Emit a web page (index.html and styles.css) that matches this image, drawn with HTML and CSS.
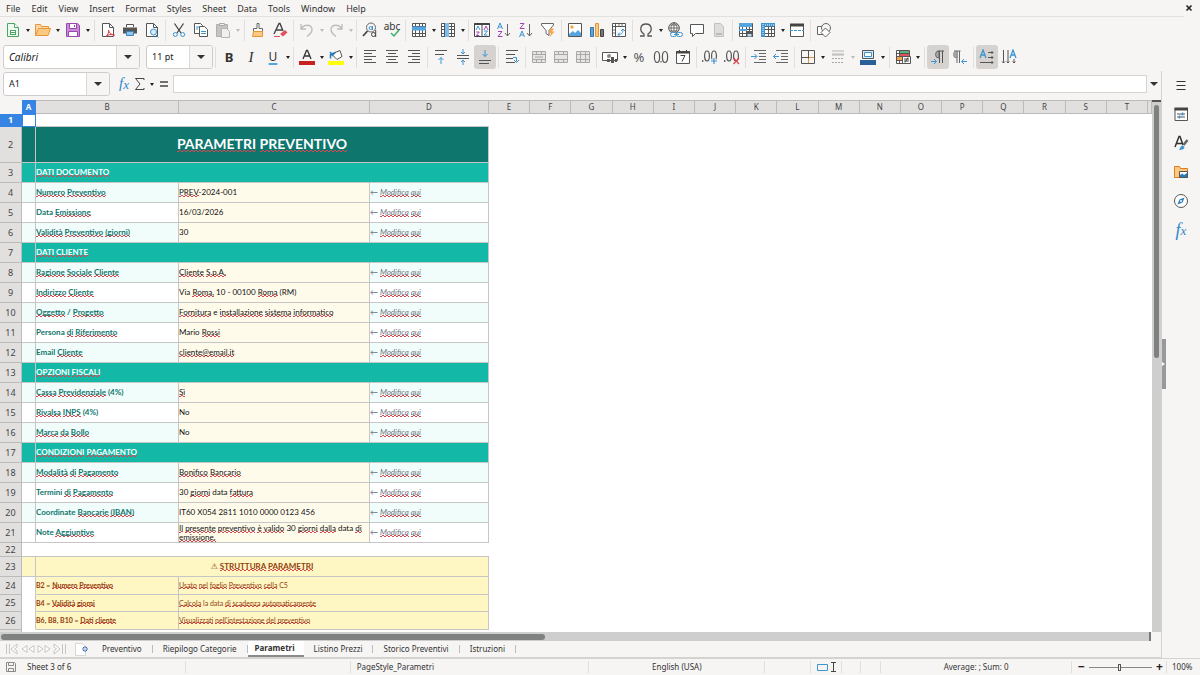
FILE: index.html
```html
<!DOCTYPE html>
<html lang="it">
<head>
<meta charset="utf-8">
<title>Parametri Preventivo</title>
<link rel="stylesheet" href="styles.css">
</head>
<body>
<svg class="defs" aria-hidden="true">
  <symbol id="grid" viewBox="0 0 16 16"><path d="M1.5 1.5h13v13h-13zM1.5 4.5h13M1.5 7.5h13M1.5 11.5h13M4.5 1.5v13M8.5 1.5v13M11.5 1.5v13" fill="#fff" stroke="#555"/></symbol>
  <symbol id="merge" viewBox="0 0 16 16"><path d="M1.500 2.500h13v11h-13zM1.500 5.500h13M1.500 10.500h13M5.500 2.500v3M10.500 2.500v3M5.500 10.500v3M10.500 10.500v3" fill="#e6e5e3" stroke="#a9a8a6"/></symbol>
  <symbol id="pilcrow" viewBox="0 0 16 16"><path d="M7.500 2H14M9.500 2v12M12.500 2v12" fill="none" stroke="#555"/><path d="M9 2a3.500 3.500 0 0 0 0 7z" fill="#aaa" stroke="#666"/></symbol>
</svg>
<nav class="menubar" aria-label="Menu">
  <button>File</button><button>Edit</button><button>View</button><button>Insert</button><button>Format</button><button>Styles</button><button>Sheet</button><button>Data</button><button>Tools</button><button>Window</button><button>Help</button>
  <button class="close" aria-label="Close document"><svg viewBox="0 0 8 8"><path d="M1.500 1.500l5 5M6.500 1.500l-5 5" stroke="#222" stroke-width="1.600"/></svg></button>
</nav>
<div class="toolbar" role="toolbar" aria-label="Standard">
  <div class="group roomy">
    <button class="icon" aria-label="New"><svg viewBox="0 0 16 16"><path d="M2.500 1.500h7l4 4v9h-11z" fill="#eefaf0" stroke="#4aa564"/><path d="M9.500 1.500v4h4" fill="#fff" stroke="#4aa564"/><path d="M5 8h6v5H5z" fill="#4aa564"/><path d="M6 9.500h4M6 11.500h4" stroke="#fff"/></svg></button><button class="drop" aria-label="New options"></button>
    <button class="icon" aria-label="Open"><svg viewBox="0 0 16 16"><path d="M.5 13.500v-11h5l1 2h7v3" fill="#fbd6a1" stroke="#e8953a"/><path d="M.5 13.500l3-7h12l-2.500 7z" fill="#fbc97f" stroke="#e8953a"/></svg></button><button class="drop" aria-label="Open options"></button>
    <button class="icon" aria-label="Save"><svg viewBox="0 0 16 16"><path d="M1.500 1.500h11l2 2v11h-13z" fill="#c98bd8" stroke="#9a47b0"/><path d="M4.500 1.500h7v5h-7zM3.500 9.500h9v5h-9z" fill="#fff" stroke="#9a47b0"/><path d="M9.500 3v2" stroke="#9a47b0"/></svg></button><button class="drop" aria-label="Save options"></button>
  </div>
  <div class="group">
    <button class="icon" aria-label="Export as PDF"><svg viewBox="0 0 16 16"><path d="M2.500 1.500h7l4 4v9h-11z" fill="#fff" stroke="#555"/><path d="M9.500 1.500v4h4" fill="none" stroke="#555"/><path d="M6 14.500c2-2 3-4 2.500-6.500M8.500 8c.5 3 3 5 6 5M6 14.500c2-2 5-2.500 8.500-1.500" fill="none" stroke="#d9363e"/></svg></button>
    <button class="icon" aria-label="Print"><svg viewBox="0 0 16 16"><path d="M4.500 5V2.500h7V5" fill="#fff" stroke="#555"/><path d="M1 5.500h14v6H1z" fill="#555"/><path d="M4.500 9.500h7v4h-7z" fill="#8fc4ee" stroke="#3e82b8"/></svg></button>
    <button class="icon" aria-label="Print preview"><svg viewBox="0 0 16 16"><path d="M2.500 1.500h7l4 4v9h-11z" fill="#fff" stroke="#555"/><path d="M9.500 1.500v4h4" fill="none" stroke="#555"/><circle cx="9.500" cy="10" r="3" fill="#d8ecfb" stroke="#3d94d1"/><path d="M11.500 12.500l3 3" stroke="#3d94d1"/></svg></button>
  </div>
  <div class="group roomy">
    <button class="icon" aria-label="Cut"><svg viewBox="0 0 16 16" fill="none"><path d="M3.500 1.500l6.500 9.500M12.500 1.500L6 11" stroke="#444" stroke-width="1.300"/><circle cx="4.300" cy="12.500" r="2" stroke="#3d94d1"/><circle cx="11.700" cy="12.500" r="2" stroke="#3d94d1"/></svg></button>
    <button class="icon" aria-label="Copy"><svg viewBox="0 0 16 16"><path d="M1.500 1.500h6l2 2v8h-8z" fill="#fff" stroke="#555"/><path d="M6.500 4.500h5l3 3v7h-8z" fill="#fff" stroke="#555"/><path d="M3 5h3M3 7h2M8 9.500h5M8 11.500h5" stroke="#3d94d1"/></svg></button>
    <button class="icon" aria-label="Paste" disabled><svg viewBox="0 0 16 16"><path d="M1.500 2.500h11v12h-11z" fill="#c4c3c1" stroke="#b0afad"/><path d="M4.500 1.500h5v2h-5z" fill="#eee" stroke="#aaa"/><path d="M6.500 6.500h5l3 3v6h-8z" fill="#f1f0ef" stroke="#b5b4b2"/></svg></button><button class="drop" aria-label="Paste options" disabled></button>
  </div>
  <div class="group">
    <button class="icon" aria-label="Clone formatting"><svg viewBox="0 0 16 16"><path d="M7 1.500h2v5h3.500v3h-9v-3H7z" fill="#fff" stroke="#666"/><path d="M3.500 9.500h9v5h-10z" fill="#fbc97f" stroke="#e8953a"/></svg></button>
    <button class="icon" aria-label="Clear formatting"><svg viewBox="0 0 16 16"><path d="M2 12L7 1.500h1L11 9M4 8h6" fill="none" stroke="#444" stroke-width="1.400"/><path d="M8 12l5-4 2.500 2.500-4.500 4z" fill="#e0525c"/><path d="M2 14.500h6" stroke="#e0525c"/></svg></button>
  </div>
  <div class="group">
    <button class="icon" aria-label="Undo" disabled><svg viewBox="0 0 16 16" fill="none" stroke="#bdbcba" stroke-width="1.300"><path d="M2 2v5h5M2 7c3-5 10-5 11 0 .4 3-3 6-5 7.500"/></svg></button><button class="drop" aria-label="Undo list" disabled></button>
    <button class="icon" aria-label="Redo" disabled><svg viewBox="0 0 16 16" fill="none" stroke="#bdbcba" stroke-width="1.300"><path d="M14 2v5H9M14 7C11 2 4 2 3 7c-.4 3 3 6 5 7.500"/></svg></button><button class="drop" aria-label="Redo list" disabled></button>
  </div>
  <div class="group">
    <button class="icon" aria-label="Find and replace"><svg viewBox="0 0 16 16" fill="none"><circle cx="9" cy="5.500" r="4.500" stroke="#666"/><path d="M5.500 9L1 14" stroke="#444" stroke-width="1.800"/><circle cx="8.700" cy="6" r="1.500" stroke="#3d94d1"/><path d="M10.500 4v4" stroke="#3d94d1"/><circle cx="11.500" cy="12.500" r="2" stroke="#444"/><path d="M13.700 8v7" stroke="#444"/></svg></button>
    <button class="icon spell" aria-label="Spelling"><span>abc</span><svg viewBox="0 0 16 16"><path d="M7 11l3 3 5-6" fill="none" stroke="#3fae6a" stroke-width="1.500"/></svg></button>
  </div>
  <div class="group">
    <button class="icon" aria-label="Row"><svg viewBox="0 0 16 16"><use href="#grid"/><path d="M1 4.500h14v4H1z" fill="#54a5e0"/></svg></button><button class="drop" aria-label="Row options"></button>
    <button class="icon" aria-label="Column"><svg viewBox="0 0 16 16"><use href="#grid"/><path d="M5 1h4v14H5z" fill="#7dbdec"/></svg></button><button class="drop" aria-label="Column options"></button>
  </div>
  <div class="group">
    <button class="icon" aria-label="Sort"><svg viewBox="0 0 16 16" fill="none"><path d="M.5 1.500h15v13H.5zM8 1v14" fill="#fff" stroke="#444"/><path d="M.5 2h15" stroke="#444" stroke-width="2"/><path d="M2 8l2-4 2 4M10 9h3.500l-3.500 4h3.500" stroke="#3d94d1"/><path d="M2.300 10h3l-3 3.500h3M10 8l2-4 2 4" stroke="#a044b4"/></svg></button>
    <button class="icon" aria-label="Sort ascending"><svg viewBox="0 0 16 16" fill="none"><path d="M1.500 7L4 1l2.500 6M2.500 5h3" stroke="#3d94d1"/><path d="M2 9.500h4l-4 5h4.500" stroke="#a044b4"/><path d="M11.500 2v11.500M9 11l2.500 3 2.500-3" stroke="#666"/></svg></button>
    <button class="icon" aria-label="Sort descending"><svg viewBox="0 0 16 16" fill="none"><path d="M2 1.500h4l-4 5h4.500" stroke="#a044b4"/><path d="M1.500 15L4 9l2.500 6M2.500 13h3" stroke="#3d94d1"/><path d="M11.500 2v11.500M9 11l2.500 3 2.500-3" stroke="#666"/></svg></button>
    <button class="icon" aria-label="AutoFilter"><svg viewBox="0 0 16 16"><path d="M1.500 1.500h12v1.500L9 8.500v5l-3-2v-3L1.500 3z" fill="#fff" stroke="#666"/><path d="M10 6.500h4l-2 3h2.500l-5 6 1.500-4.500H9z" fill="#f5a54a"/></svg></button>
  </div>
  <div class="group">
    <button class="icon" aria-label="Insert image"><svg viewBox="0 0 16 16"><path d="M1.500 1.500h13v13h-13z" fill="#fff" stroke="#555"/><path d="M2 14V12l4-3 2 2 3-3 3 3v3z" fill="#54a5e0"/><circle cx="5" cy="5" r="1.700" fill="#f5a54a"/></svg></button>
    <button class="icon" aria-label="Insert chart"><svg viewBox="0 0 16 16"><path d="M1.500 5.500h3v9h-3z" fill="#54a5e0" stroke="#3379ad"/><path d="M6.500 1.500h3v13h-3z" fill="#fbc97f" stroke="#e8953a"/><path d="M11.500 7.500h3v7h-3z" fill="#777" stroke="#444"/></svg></button>
    <button class="icon" aria-label="Pivot table"><svg viewBox="0 0 16 16" fill="none"><path d="M1.500 1.500h13v13h-13zM1.500 4.500h13M4.500 1.500v13" fill="#fff" stroke="#555"/><path d="M7 3h6M3 7v6" stroke="#777" stroke-dasharray="2 1"/><path d="M7 12.500c4 0 5-1.500 5-5M10 9l2-2 2 2M9 10.500l-2 2 2 2" stroke="#3d94d1"/></svg></button>
  </div>
  <div class="group">
    <button class="icon" aria-label="Special character"><svg viewBox="0 0 16 16"><path d="M2 14h4v-2C1 9 2 2 8 2s7 7 2 10v2h4" fill="none" stroke="#555" stroke-width="1.300"/></svg></button><button class="drop" aria-label="Special characters"></button>
    <button class="icon" aria-label="Hyperlink"><svg viewBox="0 0 16 16" fill="none"><circle cx="7" cy="6" r="5.300" stroke="#555"/><path d="M1.700 6h10.600M3 3h8M3 9h8M7 .7v10.600M7 .7c-4 3-4 8 0 10.600M7 .7c4 3 4 8 0 10.600" stroke="#555" stroke-width=".8"/><rect x="3.500" y="10.500" width="6" height="4" rx="2" fill="#f6f5f4" stroke="#3d94d1"/><rect x="9.500" y="10.500" width="6" height="4" rx="2" fill="#f6f5f4" stroke="#3d94d1"/><path d="M7 12.500h5" stroke="#3d94d1"/></svg></button>
    <button class="icon" aria-label="Comment"><svg viewBox="0 0 16 16"><path d="M1.500 2.500h13v9h-8l-3 3v-3h-2z" fill="#fff" stroke="#555"/></svg></button>
    <button class="icon" aria-label="Headers and footers" disabled><svg viewBox="0 0 16 16"><path d="M3.500 1.500h6l3 3v10h-9z" fill="#ddd" stroke="#c2c1bf"/><path d="M5 11h6v2H5z" fill="#bbb"/></svg></button>
  </div>
  <div class="group">
    <button class="icon" aria-label="Define print area"><svg viewBox="0 0 16 16"><use href="#grid"/><path d="M1 1h13v4H1zM1 7h8v2H1z" fill="#54a5e0"/><path d="M8 9h7v6H8z" fill="#555"/><path d="M9.500 12h4v2.500h-4z" fill="#b8dbf5"/></svg></button>
    <button class="icon" aria-label="Freeze rows and columns"><svg viewBox="0 0 16 16"><use href="#grid"/><path d="M1 1h14v3.500H1zM1 1h4v14H1z" fill="#3d94d1"/><path d="M3 2v12M5 3h9" stroke="#fff" stroke-dasharray="1 1"/></svg></button><button class="drop" aria-label="Freeze options"></button>
    <button class="icon" aria-label="Split window"><svg viewBox="0 0 16 16"><path d="M1.500 2.500h13v12h-13z" fill="#fff" stroke="#555"/><path d="M1 3h14" stroke="#444" stroke-width="3"/><path d="M1 8.500h14" stroke="#3d94d1" stroke-dasharray="3 1"/></svg></button>
  </div>
  <div class="group">
    <button class="icon" aria-label="Show draw functions"><svg viewBox="0 0 16 16"><path d="M1.500 4.500h7v8h-7z" fill="#fff" stroke="#666"/><circle cx="10" cy="6" r="4.500" fill="#f6f5f4" stroke="#666"/><path d="M9.500 6l4.500 4.500L9.500 15 5 10.500z" fill="#fff" stroke="#666"/></svg></button>
  </div>
</div>
<div class="toolbar format" role="toolbar" aria-label="Formatting">
  <div class="combo font"><input type="text" aria-label="Font name" value="Calibri"><button class="pick" aria-label="Font list"></button></div>
  <div class="combo size"><input type="text" aria-label="Font size" value="11 pt"><button class="pick" aria-label="Size list"></button></div>
  <div class="group lead">
    <button class="icon letter bold">B</button><button class="icon letter italic">I</button><button class="icon letter under">U</button><button class="drop" aria-label="Underline styles"></button>
  </div>
  <div class="group">
    <button class="icon" aria-label="Font color"><svg viewBox="0 0 16 16"><path d="M4 10L7.500 1.500h1L12 10M5.500 7h5" fill="none" stroke="#333" stroke-width="1.300"/><path d="M0 12h16v4H0z" fill="#c9211e"/></svg></button><button class="drop" aria-label="Font colors"></button>
    <button class="icon" aria-label="Background color"><svg viewBox="0 0 16 16"><path d="M7 3.500l5-2 2 6-5 3-4-4z" fill="#fff" stroke="#555"/><path d="M2.500 9.500v-4l5-2M2 3l3 4" fill="none" stroke="#2a7cb8" stroke-width="1.500"/><path d="M0 12h16v4H0z" fill="#ff0"/></svg></button><button class="drop" aria-label="Background colors"></button>
  </div>
  <div class="group">
    <button class="icon" aria-label="Align left"><svg viewBox="0 0 16 16"><path d="M2 1.500h12M2 4.500h8M2 7.500h12M2 10.500h8M2 13.500h12" stroke="#555"/></svg></button>
    <button class="icon" aria-label="Center"><svg viewBox="0 0 16 16"><path d="M2 1.500h12M4 4.500h8M2 7.500h12M4 10.500h8M2 13.500h12" stroke="#555"/></svg></button>
    <button class="icon" aria-label="Align right"><svg viewBox="0 0 16 16"><path d="M2 1.500h12M6 4.500h8M2 7.500h12M6 10.500h8M2 13.500h12" stroke="#555"/></svg></button>
  </div>
  <div class="group">
    <button class="icon" aria-label="Align top"><svg viewBox="0 0 16 16" fill="none"><path d="M2 1.500h12M2 5.500h9" stroke="#555"/><path d="M8 15V8.500M5.500 11L8 8.500l2.500 2.500" stroke="#3d94d1"/></svg></button>
    <button class="icon" aria-label="Center vertically"><svg viewBox="0 0 16 16" fill="none"><path d="M2 6.500h12M2 9.500h12" stroke="#555"/><path d="M8 0v4.500M6 3l2 2 2-2M8 16v-4.500M6 13l2-2 2 2" stroke="#3d94d1"/></svg></button>
    <button class="icon on" aria-label="Align bottom" aria-pressed="true"><svg viewBox="0 0 16 16" fill="none"><path d="M2 11.500h12M2 14.500h10" stroke="#555"/><path d="M8 1v6.500M5.500 5L8 7.500 10.500 5" stroke="#3d94d1"/></svg></button>
  </div>
  <div class="group">
    <button class="icon" aria-label="Wrap text"><svg viewBox="0 0 16 16" fill="none"><path d="M2 1.500h12M2 5.500h9M2 9.500h7M2 13.500h9" stroke="#555"/><path d="M9 8.500h3.500v4M10 11l2.500 2.500L15 11" stroke="#3d94d1"/></svg></button>
  </div>
  <div class="group">
    <button class="icon" aria-label="Merge and center" disabled><svg viewBox="0 0 16 16"><use href="#merge"/><path d="M4 8h8" stroke="#a9a8a6"/></svg></button>
    <button class="icon" aria-label="Merge cells" disabled><svg viewBox="0 0 16 16"><use href="#merge"/></svg></button>
    <button class="icon" aria-label="Split cells" disabled><svg viewBox="0 0 16 16"><use href="#merge"/><path d="M5.500 5v6M10.500 5v6" stroke="#a9a8a6"/></svg></button>
  </div>
  <div class="group">
    <button class="icon" aria-label="Currency"><svg viewBox="0 0 16 16"><path d="M.5 3.500h15v8H.5z" fill="#fff" stroke="#555"/><circle cx="7" cy="7" r="2" fill="#888"/><path d="M5 13v-3h3v3zM9 14V8h3v6zM13 13v-3h2v3z" fill="#555"/></svg></button><button class="drop" aria-label="Currency list"></button>
    <button class="icon glyph" aria-label="Percent">%</button>
    <button class="icon" aria-label="Number"><svg viewBox="0 0 16 16" fill="none" stroke="#555" stroke-width="1.200"><ellipse cx="4" cy="8" rx="2.600" ry="5.500"/><ellipse cx="12" cy="8" rx="2.600" ry="5.500"/><path d="M8 12v1.500"/></svg></button>
    <button class="icon" aria-label="Date"><svg viewBox="0 0 16 16" fill="none"><path d="M1.500 2.500h13v12h-13z" fill="#fff" stroke="#555"/><path d="M1 3.500h14" stroke="#444" stroke-width="2"/><path d="M4.500 1v3M11.500 1v3" stroke="#444"/><path d="M5.500 6.500H10L7 12.500" stroke="#444"/></svg></button>
  </div>
  <div class="group">
    <button class="icon" aria-label="Add decimal place"><svg viewBox="0 0 16 16" fill="none" stroke="#555" stroke-width="1.200"><path d="M.7 11v2"/><ellipse cx="5" cy="7" rx="2.400" ry="5"/><ellipse cx="12" cy="7" rx="2.400" ry="5"/><path d="M12 9v6M9 12h6" stroke="#f6f5f4" stroke-width="3"/><path d="M12 9v6M9 12h6" stroke="#3d94d1"/></svg></button>
    <button class="icon" aria-label="Delete decimal place"><svg viewBox="0 0 16 16" fill="none" stroke="#555" stroke-width="1.200"><path d="M.7 11v2"/><ellipse cx="5" cy="7" rx="2.400" ry="5"/><ellipse cx="12" cy="7" rx="2.400" ry="5"/><path d="M9.500 9l5.500 6M15 9l-5.500 6" stroke="#e0434c"/></svg></button>
  </div>
  <div class="group">
    <button class="icon" aria-label="Increase indent"><svg viewBox="0 0 16 16" fill="none"><path d="M3 1.500h12M8 4.500h7M8 7.500h7M8 10.500h7M3 13.500h12" stroke="#666"/><path d="M0 7.500h5.500M3.500 5l2.500 2.500L3.500 10" stroke="#3d94d1"/></svg></button>
    <button class="icon" aria-label="Decrease indent"><svg viewBox="0 0 16 16" fill="none"><path d="M3 1.500h12M8 4.500h7M8 7.500h7M8 10.500h7M3 13.500h12" stroke="#666"/><path d="M6 7.500H.5M3 5L.5 7.500 3 10" stroke="#3d94d1"/></svg></button>
  </div>
  <div class="group roomy">
    <button class="icon" aria-label="Borders"><svg viewBox="0 0 16 16"><path d="M8.500 2v12M2 8.500h12" stroke="#e8953a"/><path d="M1.500 1.500h13v13h-13zM8.500 1.500v8M1.500 8.500h7" fill="none" stroke="#555"/></svg></button><button class="drop" aria-label="Border list"></button>
    <button class="icon" aria-label="Border style" disabled><svg viewBox="0 0 16 16"><path d="M2 2h12M2 5h12M2 6h12" stroke="#b5b4b2"/><path d="M2 9.500h12M2 13.500h12" stroke="#a9a8a6" stroke-dasharray="2 1"/></svg></button><button class="drop" aria-label="Border styles" disabled></button>
    <button class="icon" aria-label="Border color"><svg viewBox="0 0 16 16"><path d="M2.500 1.500h11v8h-11z" fill="#d8ecfb" stroke="#555"/><path d="M4.500 3.500h7v4h-7z" fill="#fff" stroke="#3d94d1"/><path d="M0 11h16v5H0z" fill="#2a6099"/></svg></button><button class="drop" aria-label="Border colors"></button>
  </div>
  <div class="group roomy">
    <button class="icon" aria-label="Conditional formatting"><svg viewBox="0 0 16 16"><use href="#grid"/><path d="M5 2h9v2H5z" fill="#5bb27d"/><path d="M5 5h9v2H5z" fill="#e0525c"/><path d="M2 8h5v3H2z" fill="#f5a54a"/><path d="M7.500 7.500h8v7h-8z" fill="#fff" stroke="#555"/><path d="M9 10h5M9 12h5M13 8.500l-3 5" stroke="#444"/></svg></button><button class="drop" aria-label="Conditional list"></button>
  </div>
  <div class="group">
    <button class="icon on" aria-label="Left-to-right" aria-pressed="true"><svg viewBox="0 0 16 16" fill="none"><use href="#pilcrow"/><path d="M1 12.500h5M4 10l2.500 2.500L4 15" stroke="#3d94d1"/></svg></button>
    <button class="icon" aria-label="Right-to-left"><svg viewBox="0 0 16 16" fill="none"><path d="M2 2h6.500M5 2v12M7.500 2v12" stroke="#666"/><path d="M5 2a3.500 3.500 0 0 0 0 7z" fill="#aaa" stroke="#888"/><path d="M15 12.500h-5M12 10l-2.500 2.500L12 15" stroke="#3d94d1"/></svg></button>
  </div>
  <div class="group">
    <button class="icon on" aria-label="Text left to right" aria-pressed="true"><svg viewBox="0 0 16 16" fill="none"><path d="M1 9l3-8 3 8M2 6h4" stroke="#3d94d1" stroke-width="1.300"/><path d="M9 3.500h5M9 8.500h5M1 13.500h13M12.500 2L14 3.500 12.500 5M12.500 7L14 8.500 12.500 10M12.500 12l1.500 1.500-1.500 1.500" stroke="#555"/></svg></button>
    <button class="icon" aria-label="Text top to bottom"><svg viewBox="0 0 16 16" fill="none"><path d="M9 9l3-8 3 8M10 6h4" stroke="#3d94d1" stroke-width="1.300"/><path d="M2.500 1v13M7 1v13M13 10v4M1 12.500L2.500 14 4 12.500M5.500 12.500L7 14l1.500-1.500M11.500 12.500L13 14l1.500-1.500" stroke="#555"/></svg></button>
  </div>
</div>
<div class="work">
  <main class="book">
    <div class="formula">
      <div class="combo name"><input type="text" aria-label="Name box" value="A1"><button class="pick" aria-label="Named ranges"></button></div>
      <button class="fn wiz" aria-label="Function wizard"><i>f</i><i class="x">x</i></button>
      <button class="fn" aria-label="Select function"><svg viewBox="0 0 12 14"><path d="M10 3V1.500H1.500L6 7l-4.500 5.500H10V11" fill="none" stroke="#444"/></svg></button><button class="drop" aria-label="Function list"></button>
      <button class="fn" aria-label="Formula"><svg viewBox="0 0 12 14"><path d="M2 5h8M2 9h8" stroke="#444" stroke-width="1.500"/></svg></button>
      <input class="line" type="text" aria-label="Input line">
      <button class="pick bare" aria-label="Expand formula bar"></button>
    </div>
    <div class="view">
      <div class="sheet">
        <table>
          <colgroup><col class="c-head"><col class="c-a"><col class="c-b"><col class="c-c"><col class="c-d"><col span="16"><col class="c-end"></colgroup>
          <thead><tr><th class="corner"></th><th class="sel">A</th><th>B</th><th>C</th><th>D</th><th>E</th><th>F</th><th>G</th><th>H</th><th>I</th><th>J</th><th>K</th><th>L</th><th>M</th><th>N</th><th>O</th><th>P</th><th>Q</th><th>R</th><th>S</th><th>T</th><th></th></tr></thead>
          <tbody>
            <tr class="r1"><th class="sel">1</th><td class="cursor"></td><td colspan="3"></td></tr>
            <tr class="title"><th>2</th><td></td><td colspan="3"><u>PARAMETRI</u> <u>PREVENTIVO</u></td></tr>
            <tr class="section"><th>3</th><td></td><td colspan="3"><u>DATI</u> <u>DOCUMENTO</u></td></tr>
            <tr class="row mint"><th>4</th><td></td><td><u>Numero</u> <u>Preventivo</u></td><td><u>PREV</u>-2024-001</td><td>← <u>Modifica</u> <u>qui</u></td></tr>
            <tr class="row"><th>5</th><td></td><td>Data <u>Emissione</u></td><td>16/03/2026</td><td>← <u>Modifica</u> <u>qui</u></td></tr>
            <tr class="row mint"><th>6</th><td></td><td><u>Validità</u> <u>Preventivo</u> <u>(giorni)</u></td><td>30</td><td>← <u>Modifica</u> <u>qui</u></td></tr>
            <tr class="section"><th>7</th><td></td><td colspan="3"><u>DATI</u> <u>CLIENTE</u></td></tr>
            <tr class="row mint"><th>8</th><td></td><td><u>Ragione</u> <u>Sociale</u> <u>Cliente</u></td><td><u>Cliente</u> <u>S.p.A.</u></td><td>← <u>Modifica</u> <u>qui</u></td></tr>
            <tr class="row"><th>9</th><td></td><td><u>Indirizzo</u> <u>Cliente</u></td><td>Via <u>Roma,</u> 10 - 00100 <u>Roma</u> (RM)</td><td>← <u>Modifica</u> <u>qui</u></td></tr>
            <tr class="row mint"><th>10</th><td></td><td><u>Oggetto</u> / <u>Progetto</u></td><td><u>Fornitura</u> e <u>installazione</u> <u>sistema</u> <u>informatico</u></td><td>← <u>Modifica</u> <u>qui</u></td></tr>
            <tr class="row"><th>11</th><td></td><td>Persona <u>di</u> <u>Riferimento</u></td><td>Mario <u>Rossi</u></td><td>← <u>Modifica</u> <u>qui</u></td></tr>
            <tr class="row mint"><th>12</th><td></td><td>Email <u>Cliente</u></td><td><u>cliente@email.it</u></td><td>← <u>Modifica</u> <u>qui</u></td></tr>
            <tr class="section"><th>13</th><td></td><td colspan="3"><u>OPZIONI</u> <u>FISCALI</u></td></tr>
            <tr class="row mint"><th>14</th><td></td><td><u>Cassa</u> <u>Previdenziale</u> (4%)</td><td><u>Sì</u></td><td>← <u>Modifica</u> <u>qui</u></td></tr>
            <tr class="row"><th>15</th><td></td><td><u>Rivalsa</u> <u>INPS</u> (4%)</td><td>No</td><td>← <u>Modifica</u> <u>qui</u></td></tr>
            <tr class="row mint"><th>16</th><td></td><td><u>Marca</u> <u>da</u> <u>Bollo</u></td><td>No</td><td>← <u>Modifica</u> <u>qui</u></td></tr>
            <tr class="section"><th>17</th><td></td><td colspan="3"><u>CONDIZIONI</u> <u>PAGAMENTO</u></td></tr>
            <tr class="row mint"><th>18</th><td></td><td><u>Modalità</u> <u>di</u> <u>Pagamento</u></td><td><u>Bonifico</u> <u>Bancario</u></td><td>← <u>Modifica</u> <u>qui</u></td></tr>
            <tr class="row"><th>19</th><td></td><td>Termini <u>di</u> <u>Pagamento</u></td><td>30 <u>giorni</u> data <u>fattura</u></td><td>← <u>Modifica</u> <u>qui</u></td></tr>
            <tr class="row mint"><th>20</th><td></td><td>Coordinate <u>Bancarie</u> <u>(IBAN)</u></td><td>IT60 X054 2811 1010 0000 0123 456</td><td>← <u>Modifica</u> <u>qui</u></td></tr>
            <tr class="row"><th>21</th><td></td><td>Note <u>Aggiuntive</u></td><td class="wrap"><u>Il</u> <u>presente</u> <u>preventivo</u> <u>è</u> <u>valido</u> 30 <u>giorni</u> <u>dalla</u> data <u>di</u> <u>emissione.</u></td><td>← <u>Modifica</u> <u>qui</u></td></tr>
            <tr class="r22"><th>22</th><td></td><td colspan="3"></td></tr>
            <tr class="notehead"><th>23</th><td></td><td colspan="3">⚠ <u>STRUTTURA</u> <u>PARAMETRI</u></td></tr>
            <tr class="note n24"><th>24</th><td></td><td>B2 = <u>Numero</u> <u>Preventivo</u></td><td colspan="2"><u>Usato</u> <u>nel</u> <u>foglio</u> <u>Preventivo</u> <u>cella</u> C5</td></tr>
            <tr class="note"><th>25</th><td></td><td>B4 = <u>Validità</u> <u>giorni</u></td><td colspan="2"><u>Calcola</u> la data <u>di</u> <u>scadenza</u> <u>automaticamente</u></td></tr>
            <tr class="note n26"><th>26</th><td></td><td>B6, B8, B10 = <u>Dati</u> <u>cliente</u></td><td colspan="2"><u>Visualizzati</u> <u>nell'intestazione</u> <u>del</u> <u>preventivo</u></td></tr>
            <tr class="r27"><th></th><td></td><td colspan="3"></td></tr>
          </tbody>
        </table>
      </div>
      <div class="vscroll"><div class="vthumb"></div></div>
    </div>
    <div class="hscroll"><div class="htrack"><div class="hthumb"></div></div></div>
    <nav class="tabs" aria-label="Sheets">
      <svg class="steps" viewBox="0 0 62 12" fill="#fff" stroke="#c6c5c3"><path d="M1.500 1v10M4.500 1v10M12 1L6 6l6 5V8L9.500 6 12 4zM22 2.500L17 6l5 3.500zM29 2.500L24 6l5 3.500zM33 2.500L38 6l-5 3.500zM40 2.500L45 6l-5 3.500zM49 1l6 5-6 5V8l2.500-2L49 4zM57.500 1v10M60.500 1v10"/></svg>
      <button class="add" aria-label="Add sheet"><svg viewBox="0 0 14 14"><path d="M.5 1.500h7l3 3v9H.5z" fill="#fff" stroke="#d8d7d5"/><path d="M10 4v6M7 7h6M8 5l4 4M12 5L8 9" stroke="#3568b5"/><circle cx="10" cy="7" r="1" fill="#fff"/></svg></button>
      <button class="tab">Preventivo</button><button class="tab">Riepilogo Categorie</button><button class="tab active">Parametri</button><button class="tab">Listino Prezzi</button><button class="tab">Storico Preventivi</button><button class="tab">Istruzioni</button>
    </nav>
  </main>
  <aside class="sidebar">
    <button aria-label="Sidebar settings"><svg viewBox="0 0 16 16"><path d="M3.500 4.500h9M3.500 8.500h9M3.500 12.500h9" stroke="#333" stroke-width="1.200"/></svg></button>
    <button aria-label="Properties"><svg viewBox="0 0 16 16"><path d="M2 2.500h12.500v12H2z" fill="#fff" stroke="#555"/><path d="M1.500 3h13.500" stroke="#444" stroke-width="3"/><path d="M4 8h8M4 11h8" stroke="#555"/><path d="M9.500 6.500v3M6.500 9.500v3" stroke="#3d94d1" stroke-width="1.500"/></svg></button>
    <button aria-label="Styles"><svg viewBox="0 0 16 16" fill="none"><path d="M2 12L6 1.500h1L10 10M3.500 8.500H9" stroke="#333" stroke-width="1.500"/><path d="M14.500 5l-4 5" stroke="#666" stroke-width="2.500"/><path d="M6 15c1-1 1-4 4-4.500l1.500 1.500c0 2-2 3-5.500 3z" fill="#3d94d1"/></svg></button>
    <button aria-label="Gallery"><svg viewBox="0 0 16 16"><path d="M1.500 13.500v-11h5l1 2h7v9z" fill="#fbc97f" stroke="#e07b1e"/><path d="M6.500 7.500h8v6h-8z" fill="#fff" stroke="#555"/><path d="M7 13v-2l2.500-1.500L11 11l3-2v4z" fill="#2a7cb8"/></svg></button>
    <button aria-label="Navigator"><svg viewBox="0 0 16 16"><circle cx="8" cy="8" r="6.500" fill="#fff" stroke="#555"/><path d="M11.500 4.500L9.500 9.500l-5 2 2-5z" fill="#2a7cb8"/><circle cx="8" cy="8" r="1" fill="#fff"/></svg></button>
    <button class="wiz" aria-label="Functions"><i>f</i><i class="x">x</i></button>
    <button class="handle" aria-label="Hide sidebar"></button>
  </aside>
</div>
<footer class="status">
  <span class="saved"><svg viewBox="0 0 12 12" fill="none" stroke="#8a8988"><path d="M1.500 1.500h8l1 1v8h-9zM3.500 1.500v3h5v-3M3.500 10.500v-3h5v3"/></svg></span>
  <span>Sheet 3 of 6</span><span></span><span class="style">PageStyle_Parametri</span><span class="mid">English (USA)</span><span></span>
  <span class="mid"><svg class="mode" viewBox="0 0 20 12" fill="none"><path d="M1.500 3.500h10v6h-10z" stroke="#3d94d1"/><path d="M15 1.500h5M17.500 1.500v9M15 10.500h5" stroke="#444"/></svg></span>
  <span></span><span></span><span class="mid">Average: ; Sum: 0</span>
  <span class="zoom"><button aria-label="Zoom out">−</button><input type="range" aria-label="Zoom" min="0" max="200" value="98"><button aria-label="Zoom in">+</button></span>
  <span class="pct">100%</span>
</footer>
</body>
</html>
```
FILE: styles.css
```css
* { box-sizing: border-box; }
body { margin: 0; height: 100vh; display: flex; flex-direction: column; background: #f6f5f4; color: #333; font: 8px/12px "Noto Sans", sans-serif; overflow: hidden; }
button, input { font: inherit; color: inherit; margin: 0; padding: 0; border: 0; background: none; }
.defs { display: none; }
svg { display: block; }

.menubar { display: flex; gap: 1px; height: 17px; margin-right: 16px; padding: 1px 0 0 1px; border-bottom: 1px solid #e2e1df; font-size: 9px; }
.menubar button { padding: 0 5px; }
.menubar .close { position: absolute; right: 7px; top: 4px; width: 8px; height: 8px; padding: 0; }

.toolbar { display: flex; align-items: center; height: 26px; padding-left: 2px; }
.group { display: flex; align-items: center; }
.group + .group::before, .lead::before { content: ""; width: 1px; height: 21px; margin: 0 2px; background: #e0dfdd; }
.icon { display: flex; align-items: center; justify-content: center; width: 22px; height: 24px; border-radius: 3px; }
.icon svg { width: 16px; height: 16px; }
.icon.on { background: #d5d2cf; }
.drop { display: flex; align-items: center; justify-content: center; width: 7px; height: 22px; }
.roomy .drop, .formula .drop { width: 8px; }
.drop::after { content: ""; border: 2px solid transparent; border-top: 3px solid #222; border-bottom: 0; }
.drop:disabled::after { border-top-color: #bdbcba; }
.spell { flex-direction: column; font-size: 10px; line-height: 8px; }
.spell svg { margin-top: -8px; }

.toolbar.format { padding-left: 3px; height: 28px; }
.combo { display: flex; height: 24px; background: #fff; border: 1px solid #cfccc9; border-radius: 3px; overflow: hidden; }
.combo input { flex: 1; min-width: 0; padding-left: 5px; font-size: 9px; color: #222; }
.pick { display: flex; align-items: center; justify-content: center; width: 23px; background: #f6f5f4; border-left: 1px solid #dad7d4; }
.pick::after { content: ""; border: 4px solid transparent; border-top-color: #333; border-bottom: 0; }
.font { width: 137px; }
.combo.font input { font-style: italic; font-size: 10px; }
.size { width: 67px; margin-left: 6px; }
.name { width: 107px; }
.letter { font: 14px/20px "Noto Sans", sans-serif; }
.letter.bold { font-weight: bold; font-size: 13px; }
.italic { font-family: "Liberation Serif", serif; font-style: italic; font-size: 15px; }
.under { text-decoration: underline #54a5e0 2px; text-underline-offset: 2px; font-size: 12px; }
.glyph { font-size: 13px; color: #555; }

.work { display: flex; flex: 1; min-height: 0; }
.book { flex: 1; min-width: 0; display: flex; flex-direction: column; border-right: 1px solid #d5d3d0; }
.formula { display: flex; align-items: center; height: 29px; padding: 0 0 3px 3px; }
.fn { display: flex; justify-content: center; width: 16px; }
.fn svg { width: 12px; height: 14px; }
.wiz { color: #2f86c6; font: 15px/18px "Liberation Serif", serif; }
.formula .wiz { margin-left: 6px; align-items: flex-start; }
.wiz .x { font-size: 13px; padding-top: 2px; }
.line { flex: 1; min-width: 0; height: 18px; margin-left: 1px; background: #fff; border: 1px solid #d5d3d0; font-size: 9px; }
.bare { width: 14px; background: none; border: 0; }

.view { flex: 1; min-height: 0; display: flex; }
.sheet { flex: 1; min-width: 0; overflow: hidden; background: #fff; }
table { width: 100%; table-layout: fixed; border-spacing: 0; font: 8px/9px Lato, "DejaVu Sans", sans-serif; color: #111; }
.c-head { width: 22px; }
.c-a { width: 14px; }
.c-b { width: 143px; }
.c-c { width: 191px; }
.c-d { width: 119px; }
.c-end { width: 4px; }
th { padding: 0; font: 8px/10px "Noto Sans", sans-serif; color: #444; background: #e1e0df; border: solid #bcbbb9; border-width: 0 1px 1px 0; }
thead th { height: 14px; border-top: 1px solid #bcbbb9; }
tbody th { height: 20px; font-size: 9px; }
.corner { background: #f6f5f4; border-color: #f6f5f4; }
th.sel { background: #3584e4; border-color: #3584e4; color: #fff; font-weight: bold; }
td { padding: 0; border: solid #c6c6c6; border-width: 0 1px 1px 0; white-space: nowrap; overflow: hidden; }
.wrap { white-space: normal; }
.r1 th { height: 13px; }
.r1 td, .r22 td, .r27 td { border-right: 0; }
.r1 .cursor { border: 1px solid #3584e4; }
.title td { background: #0f766e; color: #fff; font: bold 14px/18px Lato, sans-serif; text-align: center; padding-bottom: 2px; }
.title th { height: 36px; }
.section td { background: #14b8a6; color: #fff; font-weight: bold; }
.row td:nth-child(3) { color: #0f766e; font-weight: bold; }
.mint td { background: #f0fdfa; }
.row td:nth-child(4) { background: #fffbeb; }
.row td:nth-child(5) { color: #6b7280; font-style: italic; }
.r22 th { height: 14px; }
.r27 td { border-bottom: 0; }
.notehead td, .note td { background: #fef6c3; color: #92400e; }
.notehead td { font-weight: bold; text-align: center; }
.note td { font-size: 7px; }
.note td:nth-child(2) { background: #fff; border-bottom-color: #fff; }
.note td:nth-child(3) { font-weight: bold; }
.note th { height: 17px; }
.n24 th, .n26 th { height: 18px; }
u { text-decoration: none; background: linear-gradient(90deg, #d8474f 50%, transparent 50%) 0 100% / 4px 1px repeat-x, linear-gradient(90deg, transparent 50%, #d8474f 50%) 0 calc(100% - 1px) / 4px 1px repeat-x; }

.vscroll { width: 9px; padding: 3px 2px 0; background: #cecece; border-top: 2px solid #555; }
.vthumb { height: 48%; border-radius: 3px; background: #7f8180; }
.hscroll { height: 9px; padding-right: 10px; }
.htrack { height: 9px; padding: 2px 1px 1px; background: #cecece; border-right: 2px solid #777; }
.hthumb { width: 47.400%; height: 6px; border-radius: 3px; background: #7f8180; }

.tabs { display: flex; align-items: center; height: 17px; border-bottom: 1px solid #d5d3d0; }
.steps { width: 62px; height: 12px; margin: 0 8px 0 5px; }
.add { width: 12px; margin-right: 5px; }
.add svg { width: 14px; height: 14px; }
.tab { position: relative; height: 16px; padding: 0 11px 0 10px; }
.tab::after { content: ""; position: absolute; right: 0; top: 4px; height: 8px; border-right: 1px solid #bbb; }
.tab.active { background: #fff; font-weight: bold; padding: 0 9px 0 7px; border-bottom: 2px solid #8a8a8a; }
.tab.active::after { display: none; }

.sidebar { position: relative; width: 38px; display: flex; flex-direction: column; align-items: center; gap: 5px; padding-top: 2px; }
.sidebar button { display: flex; align-items: center; justify-content: center; width: 24px; height: 24px; }
.sidebar svg { width: 16px; height: 16px; }
.sidebar .wiz { font-size: 18px; }
.sidebar .handle { position: absolute; left: 0; top: 45.700%; width: 4px; height: 50px; background: #999; justify-content: flex-start; }
.handle::after { content: ""; border: 2px solid transparent; border-left: 3px solid #fff; border-right: 0; }

.status { display: grid; grid-template-columns: 22px 164fr 165fr 239fr 176fr 46fr 31px 19px 20px 191fr 95px 33px; align-items: center; height: 17px; border-top: 1px solid #d5d3d0; }
.status span { display: flex; align-items: center; height: 12px; padding-left: 5px; border-right: 1px solid #e0dfdd; }
.status .saved, .status .pct { border: 0; }
.status .style { padding-left: 6px; }
.status .mid { justify-content: center; padding: 0; }
.saved svg { width: 12px; height: 12px; }
.mode { width: 20px; height: 12px; }
.status .zoom { gap: 3px; padding: 0 2px 0 5px; }
.zoom button { font-size: 12px; font-weight: bold; width: 9px; color: #222; }
.zoom input { flex: 1; min-width: 0; height: 10px; appearance: none; background: linear-gradient(#888, #888) 0 50% / 100% 1px no-repeat; }
.zoom input::-webkit-slider-thumb { appearance: none; width: 3px; height: 7px; background: #f6f5f4; border: 1px solid #555; }
```
